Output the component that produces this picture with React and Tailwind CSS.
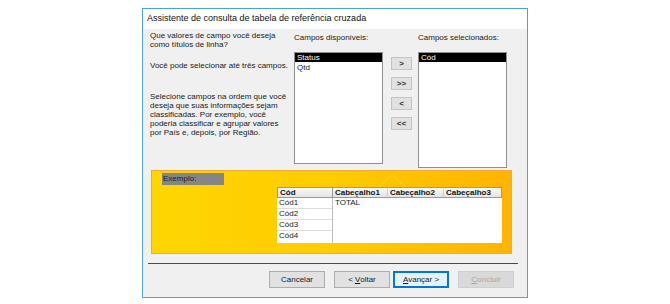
import React from "react";

const font = { fontFamily: '"Liberation Sans", Arial, sans-serif' };

const ListBox = ({ label, items }) => (
  <div className="flex flex-col w-[89px]">
    <div className="h-[9px] mt-[4px] mb-[10px] leading-[9px] text-[8px] text-[#1a1a1a] whitespace-nowrap">
      {label}
    </div>
    <div className="h-[116px] border border-[#8f8f8f] bg-white">
      {items.map((it, i) => (
        <div
          key={it}
          className={
            i === 0
              ? "h-[9px] leading-[9px] pl-[2px] text-[8px] bg-black text-white"
              : "h-[9px] leading-[9px] pl-[2px] text-[8px] text-[#1a1a1a] mt-[1px]"
          }
        >
          {it}
        </div>
      ))}
    </div>
  </div>
);

const MoveButton = ({ children, className = "" }) => (
  <div
    className={`w-[21px] h-[13px] flex items-center justify-center border border-[#c4c4c4] bg-[#e1e1e1] text-[8px] font-bold text-[#333] ${className}`}
  >
    {children}
  </div>
);

const DialogButton = ({ children, variant }) => {
  let cls =
    "w-[56px] h-[17px] flex items-center justify-center text-[8px] border ";
  if (variant === "default")
    cls += "border-[#0078d7] border-2 bg-[#e5f1fb] text-[#1a1a1a]";
  else if (variant === "disabled")
    cls += "border-[#cfcfcf] bg-[#d9d9d9] text-[#a8a8a8]";
  else cls += "border-[#adadad] bg-[#e1e1e1] text-[#1a1a1a]";
  return <div className={cls}>{children}</div>;
};

export default function App() {
  return (
    <div className="w-[670px] h-[304px] bg-white pt-[8px] pl-[142px]" style={font}>
      <div className="w-[386px] h-[290px] border border-[#4aa3df] flex flex-col">
        {/* TITLE BAR */}
        <div className="h-[20px] bg-white pl-[4px] flex items-center text-[9px] text-[#111]">
          Assistente de consulta de tabela de referência cruzada
        </div>

        {/* BODY */}
        <div className="flex-1 bg-[#f0f0f0] flex flex-col">
          {/* TOP SECTION */}
          <div className="flex h-[135px] pl-[7px]">
            <div className="w-[144px] text-[8px] leading-[9px] text-[#1a1a1a]">
              <p className="mt-[2px]">
                Que valores de campo você deseja
                <br />
                como títulos de linha?
              </p>
              <p className="mt-[12px]">Você pode selecionar até três campos.</p>
              <p className="mt-[22px]">
                Selecione campos na ordem que você
                <br />
                deseja que suas informações sejam
                <br />
                classificadas. Por exemplo, você
                <br />
                poderia classificar e agrupar valores
                <br />
                por País e, depois, por Região.
              </p>
            </div>

            <ListBox label="Campos disponíveis:" items={["Status", "Qtd"]} />

            <div className="flex flex-col ml-[8px] mt-[28px] gap-[7px]">
              <MoveButton>&gt;</MoveButton>
              <MoveButton>&gt;&gt;</MoveButton>
              <MoveButton>&lt;</MoveButton>
              <MoveButton>&lt;&lt;</MoveButton>
            </div>

            <div className="ml-[6px]">
              <ListBox label="Campos selecionados:" items={["Cód"]} />
            </div>
          </div>

          {/* EXAMPLE PANEL */}
          <div className="relative mt-[6px] ml-[8px] w-[361px] h-[84px] border border-[#f2a93b] bg-linear-to-r from-[#ffd600] via-[#ffcc00] to-[#ffb400] overflow-hidden">
            <svg
              className="absolute left-0 top-0"
              width="361"
              height="84"
              viewBox="0 0 361 84"
              fill="none"
            >
              <polyline
                points="200,40 240,4 280,40"
                stroke="#ffe066"
                strokeOpacity="0.5"
                strokeWidth="1"
              />
              <polyline
                points="220,60 265,18 310,60"
                stroke="#ffe066"
                strokeOpacity="0.35"
                strokeWidth="1"
              />
            </svg>

            <div className="relative ml-[10px] mt-[2px] w-[62px] h-[12px] bg-[#858585] text-[8px] leading-[12px] pl-[1px] text-[#222]">
              Exemplo:
            </div>

            <div className="relative ml-[125px] mt-[2px] w-[225px] h-[56px] flex flex-col text-[8px]">
              <div className="flex h-[11px] bg-linear-to-b from-[#fafafa] to-[#e4e4e4] border border-[#9a9a9a] font-bold text-[#111] leading-[9px]">
                <div className="w-[55px] pl-[2px] border-r border-[#9a9a9a]">Cód</div>
                <div className="w-[55px] pl-[2px] border-r border-[#d0d0d0]">Cabeçalho1</div>
                <div className="w-[56px] pl-[2px] border-r border-[#d0d0d0]">Cabeçalho2</div>
                <div className="flex-1 pl-[2px]">Cabeçalho3</div>
              </div>
              <div className="flex flex-1">
                <div className="w-[55px] flex flex-col gap-[1px] bg-[#dcdcdc] text-[#222]">
                  <div className="h-[10px] bg-white pl-[2px] leading-[10px]">Cód1</div>
                  <div className="h-[10px] bg-white pl-[2px] leading-[10px]">Cód2</div>
                  <div className="h-[10px] bg-white pl-[2px] leading-[10px]">Cód3</div>
                  <div className="flex-1 bg-white pl-[2px] leading-[10px]">Cód4</div>
                </div>
                <div className="flex-1 bg-white border-l border-[#bdbdbd] pl-[2px] leading-[10px] text-[#222]">
                  TOTAL
                </div>
              </div>
            </div>
          </div>

          {/* SEPARATOR */}
          <div className="mt-[9px] ml-[5px] w-[370px] h-px bg-[#4a4a4a]" />

          {/* BUTTONS */}
          <div className="flex mt-[7px] ml-[126px]">
            <DialogButton>Cancelar</DialogButton>
            <div className="ml-[9px]">
              <DialogButton>
                &lt; <span className="underline ml-[2px]">V</span>oltar
              </DialogButton>
            </div>
            <div className="ml-[3px]">
              <DialogButton variant="default">
                <span className="underline">A</span>vançar &gt;
              </DialogButton>
            </div>
            <div className="ml-[9px]">
              <DialogButton variant="disabled">
                <span className="underline">C</span>oncluir
              </DialogButton>
            </div>
          </div>
        </div>
      </div>
    </div>
  );
}
